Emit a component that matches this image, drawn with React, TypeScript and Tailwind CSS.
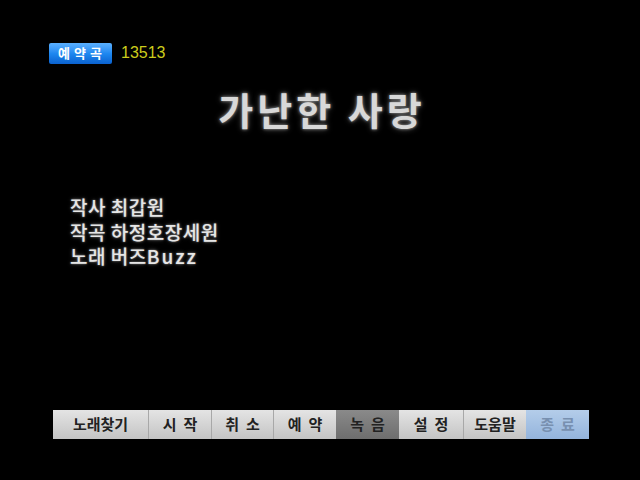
const buttons = [
  { label: '노래찾기', w: 'w-[95px]', kind: 'normal' },
  { label: '시  작', w: 'w-[63px]', kind: 'normal' },
  { label: '취  소', w: 'w-[62px]', kind: 'normal' },
  { label: '예  약', w: 'w-[63px]', kind: 'normal' },
  { label: '녹  음', w: 'w-[63px]', kind: 'active' },
  { label: '설  정', w: 'w-[64px]', kind: 'normal' },
  { label: '도움말', w: 'w-[63px]', kind: 'normal' },
  { label: '종  료', w: 'w-[63px]', kind: 'off' },
]

const font = { fontFamily: '"Noto Sans CJK KR", "Noto Sans", sans-serif' }

export default function App() {
  return (
    <div className="flex h-[480px] w-[640px] flex-col bg-black" style={font}>
      <div className="flex items-center gap-[9px] pl-[49px] pt-[41px]">
        <div className="flex h-[21px] w-[63px] items-center justify-center rounded-[2px] bg-gradient-to-b from-[#5ab0ff] via-[#1e88f0] to-[#0b62d0] pl-[3px] text-[13px] font-bold tracking-[4px] text-white">
          예약곡
        </div>
        <span className="text-[16px] text-[#cccc1c]" style={{ fontFamily: '"Liberation Sans", sans-serif' }}>
          13513
        </span>
      </div>

      <div className="mt-[18px] flex justify-center pl-[4px]">
        <h1
          className="text-[38px] font-semibold leading-[52px] tracking-[4px] text-[#d8d8d8]"
          style={{ textShadow: '0 0 3px #9a9a9a, 0 0 6px #555' }}
        >
          가난한 사랑
        </h1>
      </div>

      <div
        className="mt-[60px] flex flex-col pl-[70px] text-[19px] font-medium leading-[24.5px] tracking-[0.5px] text-[#e6e6e6]"
        style={{ textShadow: '0 0 2px #888, 0 0 4px #444' }}
      >
        <span>작사 최갑원</span>
        <span>작곡 하정호장세원</span>
        <span>
          노래 버즈<span className="tracking-[2px]">Buzz</span>
        </span>
      </div>

      <div className="mt-auto mb-[41px] flex pl-[53px]">
        {buttons.map((b, i) => (
          <div
            key={b.label}
            className={
              'flex h-[29px] items-center justify-center whitespace-pre text-[15px] font-bold ' +
              b.w +
              ' ' +
              (b.kind === 'active'
                ? 'bg-gradient-to-b from-[#8a8a8a] to-[#6e6e6e] text-[#222]'
                : b.kind === 'off'
                  ? 'bg-gradient-to-b from-[#b4cdea] to-[#94b4dc] text-[#7890b0]'
                  : 'bg-gradient-to-b from-[#e4e4e4] to-[#c4c4c4] text-[#222]') +
              (i > 0 && b.kind === 'normal' && buttons[i - 1].kind === 'normal' ? ' border-l border-[#a8a8a8]' : '')
            }
          >
            {b.label}
          </div>
        ))}
      </div>
    </div>
  )
}
